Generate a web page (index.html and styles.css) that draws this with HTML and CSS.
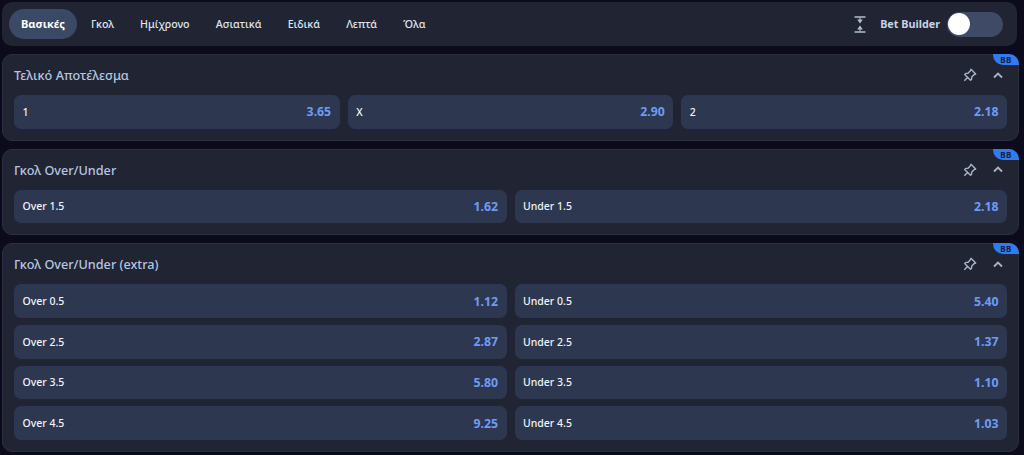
FILE: index.html
```html
<!DOCTYPE html>
<html lang="el">
<head>
<meta charset="utf-8">
<title>Αγορές</title>
<link rel="stylesheet" href="styles.css">
</head>
<body>
<main class="page">
  <nav class="tabs">
    <a class="tab active">Βασικές</a>
    <a class="tab">Γκολ</a>
    <a class="tab">Ημίχρονο</a>
    <a class="tab">Ασιατικά</a>
    <a class="tab">Ειδικά</a>
    <a class="tab">Λεπτά</a>
    <a class="tab">Όλα</a>
    <div class="builder">
      <svg class="builder-icon" width="12" height="17" viewBox="0 0 12 17"><path d="M.5 1h11M.5 16h11" fill="none" stroke="currentColor" stroke-width="1.300"/><path d="M5.500 1.500h1v2h2.300L6 7.500 3.200 3.500h2.300zM5.500 15.500h1v-2h2.300L6 9.500l-2.800 4h2.300z" fill="currentColor"/></svg>
      <span class="builder-label">Bet Builder</span>
      <span class="toggle"><span class="knob"></span></span>
    </div>
  </nav>

  <section class="market">
    <span class="bb">BB</span>
    <header class="market-head">
      <h2>Τελικό Αποτέλεσμα</h2>
      <svg class="pin" width="14" height="14" viewBox="0 0 14 14"><path d="M8 1.300 12.700 6l-1.500.6-2.600 2.600v2L7.500 12.300 1.700 6.500l1.100-1.100h2L7.400 2.800zM4.500 9.500 1.300 12.700" fill="none" stroke="currentColor" stroke-width="1.400" stroke-linejoin="round"/></svg>
      <svg class="chevron" width="10" height="7" viewBox="0 0 10 7"><path d="M1 5.500 5 1.500l4 4" fill="none" stroke="currentColor" stroke-width="1.800"/></svg>
    </header>
    <div class="odds three">
      <button class="odd"><span>1</span><b>3.65</b></button>
      <button class="odd"><span>X</span><b>2.90</b></button>
      <button class="odd"><span>2</span><b>2.18</b></button>
    </div>
  </section>

  <section class="market">
    <span class="bb">BB</span>
    <header class="market-head">
      <h2>Γκολ Over/Under</h2>
      <svg class="pin" width="14" height="14" viewBox="0 0 14 14"><path d="M8 1.300 12.700 6l-1.500.6-2.600 2.600v2L7.500 12.300 1.700 6.500l1.100-1.100h2L7.400 2.800zM4.500 9.500 1.300 12.700" fill="none" stroke="currentColor" stroke-width="1.400" stroke-linejoin="round"/></svg>
      <svg class="chevron" width="10" height="7" viewBox="0 0 10 7"><path d="M1 5.500 5 1.500l4 4" fill="none" stroke="currentColor" stroke-width="1.800"/></svg>
    </header>
    <div class="odds two">
      <button class="odd"><span>Over 1.5</span><b>1.62</b></button>
      <button class="odd"><span>Under 1.5</span><b>2.18</b></button>
    </div>
  </section>

  <section class="market">
    <span class="bb">BB</span>
    <header class="market-head">
      <h2>Γκολ Over/Under (extra)</h2>
      <svg class="pin" width="14" height="14" viewBox="0 0 14 14"><path d="M8 1.300 12.700 6l-1.500.6-2.600 2.600v2L7.500 12.300 1.700 6.500l1.100-1.100h2L7.400 2.800zM4.500 9.500 1.300 12.700" fill="none" stroke="currentColor" stroke-width="1.400" stroke-linejoin="round"/></svg>
      <svg class="chevron" width="10" height="7" viewBox="0 0 10 7"><path d="M1 5.500 5 1.500l4 4" fill="none" stroke="currentColor" stroke-width="1.800"/></svg>
    </header>
    <div class="odds two">
      <button class="odd"><span>Over 0.5</span><b>1.12</b></button>
      <button class="odd"><span>Under 0.5</span><b>5.40</b></button>
      <button class="odd"><span>Over 2.5</span><b>2.87</b></button>
      <button class="odd"><span>Under 2.5</span><b>1.37</b></button>
      <button class="odd"><span>Over 3.5</span><b>5.80</b></button>
      <button class="odd"><span>Under 3.5</span><b>1.10</b></button>
      <button class="odd"><span>Over 4.5</span><b>9.25</b></button>
      <button class="odd"><span>Under 4.5</span><b>1.03</b></button>
    </div>
  </section>
</main>
</body>
</html>
```
FILE: styles.css
```css
* { box-sizing: border-box; }
html, body { margin: 0; height: 100%; overflow: hidden; }
body {
  background: #0b0b1c;
  font-family: "Noto Sans", "Open Sans", sans-serif;
  color: #fff;
}
.page {
  display: flex;
  flex-direction: column;
  padding: 2px 5px 0 2px;
}
.tabs {
  display: flex;
  align-items: center;
  height: 44px;
  padding: 0 14px 0 7px;
  margin: 0 2px 8px 0;
  background: #212433;
  border-radius: 10px;
}
.tab {
  padding: 0 13.1px 1px;
  height: 30px;
  display: flex;
  align-items: center;
  font-size: 10.67px;
  font-weight: 500;
  color: #dfe5f0;
  border-radius: 15px;
}
.tab.active {
  background: #3a4966;
  color: #fff;
  font-size: 11px;
  font-weight: 700;
  padding: 0 12px 1px;
  margin-right: 1px;
}
.builder {
  margin-left: auto;
  display: flex;
  align-items: center;
}
.builder-icon { color: #b4bed0; margin-right: 14px; }
.builder-label {
  font-size: 10.8px;
  font-weight: 700;
  color: #c8d3e8;
  margin-right: 7px;
  padding-bottom: 1px;
}
.toggle {
  width: 56px;
  height: 25px;
  border-radius: 13px;
  background: #3f4b66;
  display: flex;
  align-items: center;
  padding-left: 1px;
}
.knob { width: 22px; height: 22px; border-radius: 50%; background: #fff; }
.market {
  position: relative;
  background: #212433;
  border: 1px solid #2a2f42;
  border-radius: 10px;
  padding: 0 11px 11px;
  margin-bottom: 8px;
}
.bb {
  position: absolute;
  top: -1px;
  right: -1px;
  width: 26px;
  height: 11px;
  background: #2f7bf0;
  border-radius: 0 10px 0 10px;
  font-size: 8px;
  line-height: 11px;
  font-weight: 700;
  letter-spacing: .5px;
  text-align: center;
  color: #14213d;
}
.market-head {
  height: 40px;
  display: flex;
  align-items: center;
  padding-right: 4px;
  color: #a9b4c8;
}
.market-head h2 {
  margin: 0 auto 0 0;
  font-size: 12.67px;
  font-weight: 500;
  color: #b6c6e0;
}
.chevron { margin-left: 16px; }
.odds { display: grid; gap: 7px 8px; }
.odds.three { grid-template-columns: repeat(3, 1fr); }
.odds.two { grid-template-columns: repeat(2, 1fr); }
.odd {
  height: 33.67px;
  display: flex;
  align-items: center;
  justify-content: space-between;
  padding: 0 8.5px;
  border: 0;
  border-radius: 7px;
  background: #2d3750;
  font-family: inherit;
  color: #f2f4f8;
  font-size: 10.5px;
  font-weight: 500;
}
.odd b { color: #6d9cf5; font-size: 12.3px; font-weight: 700; }
```
